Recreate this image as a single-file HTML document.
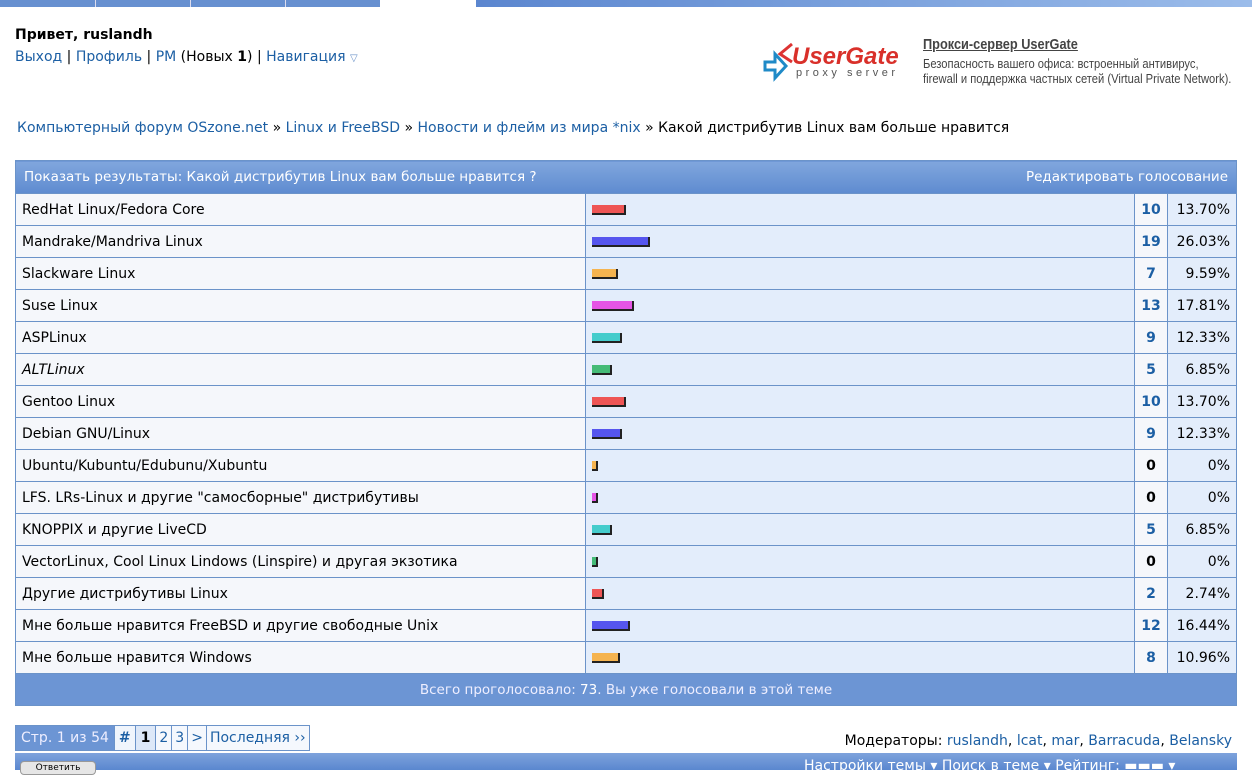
<!DOCTYPE html>
<html><head><meta charset="utf-8"><style>
body{margin:0;width:1252px;height:770px;overflow:hidden;background:#fff;font-family:"DejaVu Sans",Verdana,sans-serif;font-size:14px;color:#000;position:relative}
.lnk{color:#1c5fa4}
.abs{position:absolute;white-space:nowrap}
table.poll{position:absolute;left:15px;top:160px;width:1222px;border-collapse:collapse;table-layout:fixed}
.poll td{border:1px solid #6b93c9;height:31px;padding:0 6px;font-size:14px;white-space:nowrap;overflow:hidden}
.hd td{background:linear-gradient(#80a6dd,#5e8bd0);color:#fff;height:32px;font-size:13.5px;padding:0 8px}
.l{background:#f5f7fb}
.b{background:#e3edfb}
.c{background:#f5f7fb;text-align:center;font-weight:bold;color:#1c5fa4}
.p{background:#e3edfb;text-align:right}
.bar{display:inline-block;height:8px;border:1px solid #222;border-width:0 2px 2px 0;vertical-align:middle}
.ft td{background:#6c95d4;color:#eef;text-align:center;height:31px;font-size:13.5px}
</style></head><body>
<div class="abs" style="left:0;top:0;width:380px;height:7px;background:#6790d0"></div>
<div class="abs" style="left:95px;top:0;width:1px;height:7px;background:#dde"></div>
<div class="abs" style="left:190px;top:0;width:1px;height:7px;background:#dde"></div>
<div class="abs" style="left:285px;top:0;width:1px;height:7px;background:#dde"></div>
<div class="abs" style="left:476px;top:0;width:776px;height:7px;background:linear-gradient(90deg,#5b86cf,#9bbcea)"></div>

<div class="abs" style="left:15px;top:27px;font-weight:bold;font-size:14px">Привет, ruslandh</div>
<div class="abs" style="left:15px;top:49px"><span class="lnk">Выход</span> | <span class="lnk">Профиль</span> | <span class="lnk">PM</span> (Новых <b>1</b>) | <span class="lnk">Навигация</span> <span style="color:#6b93c9;font-size:10px">▽</span></div>

<svg class="abs" style="left:762px;top:40px" width="155" height="42"><path d="M3 22 L13 22 L13 14 L24 26 L13 38 L13 30 L3 30Z" fill="none" stroke="#1f8ac7" stroke-width="3"/><path d="M30 4 L18 14 L30 22" fill="none" stroke="#d33" stroke-width="3"/><text x="30" y="24" font-family="Liberation Sans" font-style="italic" font-weight="bold" font-size="24" fill="#d9302a">UserGate</text><text x="34" y="36" font-family="Liberation Sans" font-size="11" fill="#555" letter-spacing="3.5">proxy server</text></svg>
<div class="abs" style="left:923px;top:36px;font-family:'Liberation Sans',sans-serif;font-size:15px;font-weight:bold;color:#444;text-decoration:underline;transform:scaleX(.85);transform-origin:left">Прокси-сервер UserGate</div>
<div class="abs" style="left:923px;top:56px;font-family:'Liberation Sans',sans-serif;font-size:13px;color:#444;line-height:15px;transform:scaleX(.86);transform-origin:left">Безопасность вашего офиса: встроенный антивирус,<br>firewall и поддержка частных сетей (Virtual Private Network).</div>

<div class="abs" style="left:17px;top:120px"><span class="lnk">Компьютерный форум OSzone.net</span> » <span class="lnk">Linux и FreeBSD</span> » <span class="lnk">Новости и флейм из мира *nix</span> » Какой дистрибутив Linux вам больше нравится</div>

<table class="poll">
<colgroup><col style="width:570px"><col style="width:549px"><col style="width:33px"><col style="width:69px"></colgroup>
<tr class="hd"><td colspan="4"><div style="display:flex;justify-content:space-between"><span>Показать результаты: Какой дистрибутив Linux вам больше нравится ?</span><span>Редактировать голосование</span></div></td></tr>
<tr><td class="l">RedHat Linux/Fedora Core</td><td class="b"><span class="bar" style="width:32px;background:#ee5555"></span></td><td class="c">10</td><td class="p">13.70%</td></tr>
<tr><td class="l">Mandrake/Mandriva Linux</td><td class="b"><span class="bar" style="width:56px;background:#5555ee"></span></td><td class="c">19</td><td class="p">26.03%</td></tr>
<tr><td class="l">Slackware Linux</td><td class="b"><span class="bar" style="width:24px;background:#f5b450"></span></td><td class="c">7</td><td class="p">9.59%</td></tr>
<tr><td class="l">Suse Linux</td><td class="b"><span class="bar" style="width:40px;background:#e555e5"></span></td><td class="c">13</td><td class="p">17.81%</td></tr>
<tr><td class="l">ASPLinux</td><td class="b"><span class="bar" style="width:28px;background:#44cccc"></span></td><td class="c">9</td><td class="p">12.33%</td></tr>
<tr><td class="l"><i>ALTLinux</i></td><td class="b"><span class="bar" style="width:18px;background:#44bb77"></span></td><td class="c">5</td><td class="p">6.85%</td></tr>
<tr><td class="l">Gentoo Linux</td><td class="b"><span class="bar" style="width:32px;background:#ee5555"></span></td><td class="c">10</td><td class="p">13.70%</td></tr>
<tr><td class="l">Debian GNU/Linux</td><td class="b"><span class="bar" style="width:28px;background:#5555ee"></span></td><td class="c">9</td><td class="p">12.33%</td></tr>
<tr><td class="l">Ubuntu/Kubuntu/Edubunu/Xubuntu</td><td class="b"><span class="bar" style="width:4px;background:#f5b450"></span></td><td class="c" style="color:#000">0</td><td class="p">0%</td></tr>
<tr><td class="l">LFS. LRs-Linux и другие "самосборные" дистрибутивы</td><td class="b"><span class="bar" style="width:4px;background:#e555e5"></span></td><td class="c" style="color:#000">0</td><td class="p">0%</td></tr>
<tr><td class="l">KNOPPIX и другие LiveCD</td><td class="b"><span class="bar" style="width:18px;background:#44cccc"></span></td><td class="c">5</td><td class="p">6.85%</td></tr>
<tr><td class="l">VectorLinux, Cool Linux Lindows (Linspire) и другая экзотика</td><td class="b"><span class="bar" style="width:4px;background:#44bb77"></span></td><td class="c" style="color:#000">0</td><td class="p">0%</td></tr>
<tr><td class="l">Другие дистрибутивы Linux</td><td class="b"><span class="bar" style="width:10px;background:#ee5555"></span></td><td class="c">2</td><td class="p">2.74%</td></tr>
<tr><td class="l">Мне больше нравится FreeBSD и другие свободные Unix</td><td class="b"><span class="bar" style="width:36px;background:#5555ee"></span></td><td class="c">12</td><td class="p">16.44%</td></tr>
<tr><td class="l">Мне больше нравится Windows</td><td class="b"><span class="bar" style="width:26px;background:#f5b450"></span></td><td class="c">8</td><td class="p">10.96%</td></tr>
<tr class="ft"><td colspan="4">Всего проголосовало: <span style="color:#fff">73</span>. Вы уже голосовали в этой теме</td></tr>
</table>

<div class="abs" style="left:15px;top:725px;height:24px;display:flex;border:1px solid #6b93c9;font-size:14px;line-height:24px">
<span style="background:#6c95d4;color:#eef;padding:0 5px">Стр. 1 из 54</span>
<span style="background:#f0f5fc;color:#1c5fa4;padding:0 4px;font-weight:bold;border-left:1px solid #6b93c9">#</span>
<span style="background:#dde8f8;padding:0 5px;font-weight:bold;border-left:1px solid #6b93c9">1</span>
<span style="background:#f5f8fd;color:#1c5fa4;padding:0 3px;border-left:1px solid #6b93c9">2</span>
<span style="background:#f5f8fd;color:#1c5fa4;padding:0 3px;border-left:1px solid #6b93c9">3</span>
<span style="background:#f5f8fd;color:#1c5fa4;padding:0 3px;border-left:1px solid #6b93c9">&gt;</span>
<span style="background:#f5f8fd;color:#1c5fa4;padding:0 3px;border-left:1px solid #6b93c9">Последняя ››</span>
</div>
<div class="abs" style="right:20px;top:733px">Модераторы: <span class="lnk">ruslandh</span>, <span class="lnk">lcat</span>, <span class="lnk">mar</span>, <span class="lnk">Barracuda</span>, <span class="lnk">Belansky</span></div>

<div class="abs" style="left:15px;top:753px;width:1222px;height:17px;background:linear-gradient(#7ea3dc,#5a87cf)"></div>
<div class="abs" style="left:20px;top:761px;width:74px;height:12px;background:#e6e6e6;border:1px solid #999;border-radius:4px;font-size:9px;line-height:12px;text-align:center">Ответить</div>
<div class="abs" style="left:804px;top:758px;color:#fff;font-size:14px">Настройки темы ▾ Поиск в теме ▾ Рейтинг: ▬▬▬ ▾</div>
</body></html>
